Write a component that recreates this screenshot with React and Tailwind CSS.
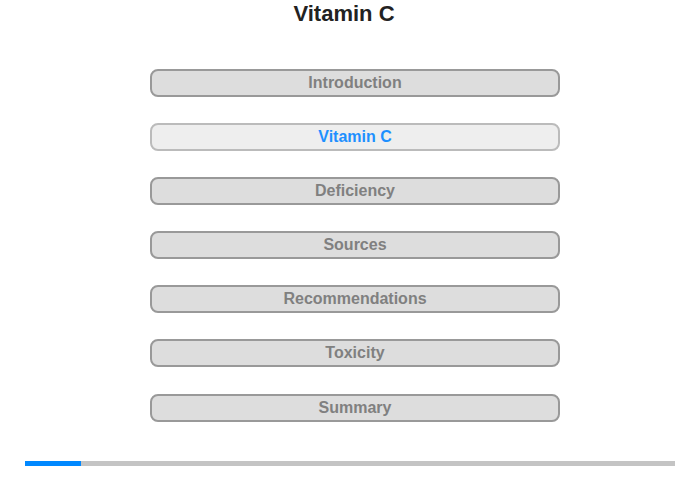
import React from 'react'

const sections = ['Introduction', 'Vitamin C', 'Deficiency', 'Sources', 'Recommendations', 'Toxicity', 'Summary']
const active = 1

export default function App() {
  return (
    <div className="w-[700px] h-[480px] bg-white font-['Liberation_Sans',Arial,sans-serif] relative">
      <h1 className="w-[688px] text-center text-[22px] leading-[26px] font-bold text-[#222] pt-[1px]">Vitamin C</h1>

      <div className="flex flex-col items-start gap-[26.1px] mt-[42px] pl-[150px]">
        {sections.map((s, i) => (
          <button
            key={s}
            className={
              i === active
                ? 'w-[410px] h-[28px] rounded-[8px] border-2 border-[#bbb] bg-[#eee] text-[#1e90ff] font-bold text-[16px] leading-[24px]'
                : 'w-[410px] h-[28px] rounded-[8px] border-2 border-[#999] bg-[#ddd] text-[#808080] font-bold text-[16px] leading-[24px]'
            }
          >
            {s}
          </button>
        ))}
      </div>

      <div className="mx-[25px] mt-[39.5px] h-[5px] bg-[#c4c4c4] flex">
        <div className="w-[56px] h-full bg-[#0088ff]" />
      </div>
    </div>
  )
}
